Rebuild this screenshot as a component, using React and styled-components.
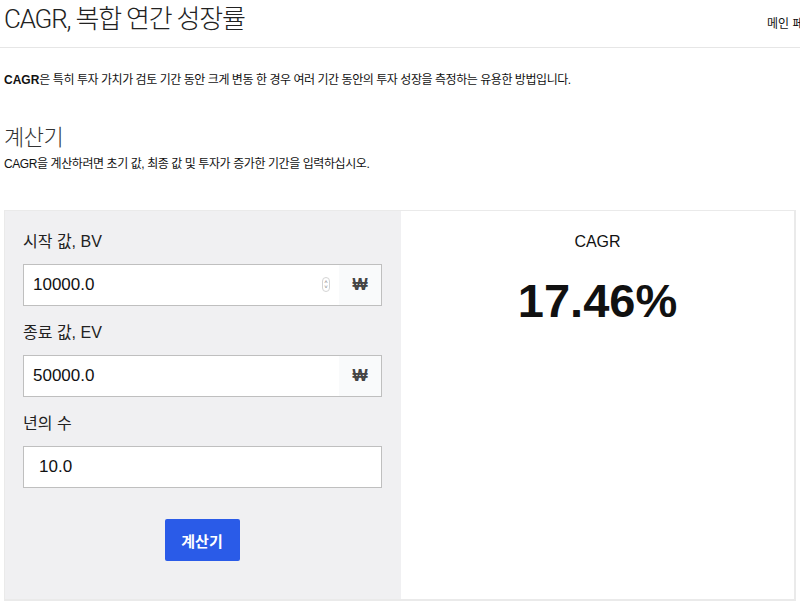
import React from 'react'
import styled, { createGlobalStyle } from 'styled-components'

const Global = createGlobalStyle`
  html, body { margin: 0; padding: 0; background: #fff; }
  body {
    font-family: "Liberation Sans", "Noto Sans CJK KR", sans-serif;
    color: #111;
    overflow: hidden;
  }
  * { box-sizing: border-box; }
`

const Header = styled.header`
  display: flex;
  justify-content: space-between;
  align-items: flex-start;
  height: 48px;
  border-bottom: 1px solid #e6e6e6;
  padding: 0 0 0 4px;
  overflow: hidden;
`

const Title = styled.h1`
  margin: 0;
  font-family: "Roboto", "Noto Sans CJK KR", sans-serif;
  font-weight: 300;
  font-size: 26px;
  line-height: 38px;
  letter-spacing: -1.2px;
  color: #222;
`

const Nav = styled.nav`
  font-size: 12px;
  margin-top: 14px;
  white-space: nowrap;
  width: 33px;
  overflow: hidden;
  color: #111;
`

const Main = styled.main`
  padding: 0 4px;
`

const Intro = styled.p`
  margin: 24px 0 0;
  font-size: 12px;
  line-height: 16px;
  letter-spacing: -0.45px;
  b { font-weight: 700; letter-spacing: 0; }
`

const SectionTitle = styled.h2`
  margin: 36px 0 0;
  font-family: "Roboto", "Noto Sans CJK KR", sans-serif;
  font-weight: 300;
  font-size: 22px;
  line-height: 28px;
  letter-spacing: -0.5px;
  color: #333;
`

const Sub = styled.p`
  margin: 4px 0 0;
  font-size: 12px;
  line-height: 16px;
  letter-spacing: -0.42px;
`

const Calc = styled.section`
  margin-top: 38px;
  display: grid;
  grid-template-columns: 396px 1fr;
  height: 391px;
  border: 1px solid #eaeaea;
  border-bottom-width: 2px;
  border-right-width: 2px;
`

const Form = styled.div`
  background: #f0f0f2;
  padding: 20px 18px 0 18px;
  display: flex;
  flex-direction: column;
`

const Label = styled.label`
  font-size: 16px;
  line-height: 22px;
  color: #222;
  margin-top: ${p => (p.first ? '0' : '16px')};
  margin-bottom: 11px;
`

const Field = styled.div`
  display: flex;
  height: 42px;
  border: 1px solid #bfbfbf;
  background: #fff;
  width: 359px;
`

const Value = styled.div`
  flex: 1;
  display: flex;
  align-items: center;
  padding-left: ${p => (p.wide ? '15px' : '9px')};
  font-size: 17px;
  color: #111;
  position: relative;
`

const Spin = styled.span`
  position: absolute;
  right: 9px;
  top: 12px;
  width: 8px;
  height: 15px;
  border: 1px solid #d4d4d4;
  border-radius: 4px;
  display: flex;
  flex-direction: column;
  align-items: center;
  justify-content: center;
  font-size: 6px;
  line-height: 5px;
  color: #777;
`

const Addon = styled.div`
  width: 42px;
  background: #f9fafb;
  display: flex;
  align-items: center;
  justify-content: center;
  font-size: 16px;
  font-weight: 700;
  color: #444;
`

const Button = styled.button`
  align-self: center;
  margin: 31px 0 0 -2px;
  width: 75px;
  height: 42px;
  border: 0;
  border-radius: 2px;
  background: #2a5be8;
  color: #fff;
  font-family: "Noto Sans CJK KR", sans-serif;
  font-weight: 700;
  font-size: 15px;
`

const Result = styled.div`
  background: #fff;
  display: flex;
  flex-direction: column;
  align-items: center;
  padding-top: 20px;
`

const ResultLabel = styled.div`
  font-size: 16px;
  line-height: 22px;
`

const ResultValue = styled.div`
  margin-top: 20px;
  font-size: 47px;
  font-weight: 700;
  line-height: 56px;
`

const Input = ({ value, unit, spin, wide }) => (
  <Field>
    <Value wide={wide}>
      {value}
      {spin && <Spin><span>˄</span><span>˅</span></Spin>}
    </Value>
    {unit && <Addon>{unit}</Addon>}
  </Field>
)

export default function App() {
  return (
    <>
      <Global />
      <Header>
        <Title>CAGR, 복합 연간 성장률</Title>
        <Nav>메인 페이지</Nav>
      </Header>
      <Main>
        <Intro>
          <b>CAGR</b>은 특히 투자 가치가 검토 기간 동안 크게 변동 한 경우 여러 기간 동안의 투자 성장을 측정하는 유용한 방법입니다.
        </Intro>
        <SectionTitle>계산기</SectionTitle>
        <Sub>CAGR을 계산하려면 초기 값, 최종 값 및 투자가 증가한 기간을 입력하십시오.</Sub>
        <Calc>
          <Form>
            <Label first>시작 값, BV</Label>
            <Input value="10000.0" unit="₩" spin />
            <Label>종료 값, EV</Label>
            <Input value="50000.0" unit="₩" />
            <Label>년의 수</Label>
            <Input value="10.0" wide />
            <Button>계산기</Button>
          </Form>
          <Result>
            <ResultLabel>CAGR</ResultLabel>
            <ResultValue>17.46%</ResultValue>
          </Result>
        </Calc>
      </Main>
    </>
  )
}
